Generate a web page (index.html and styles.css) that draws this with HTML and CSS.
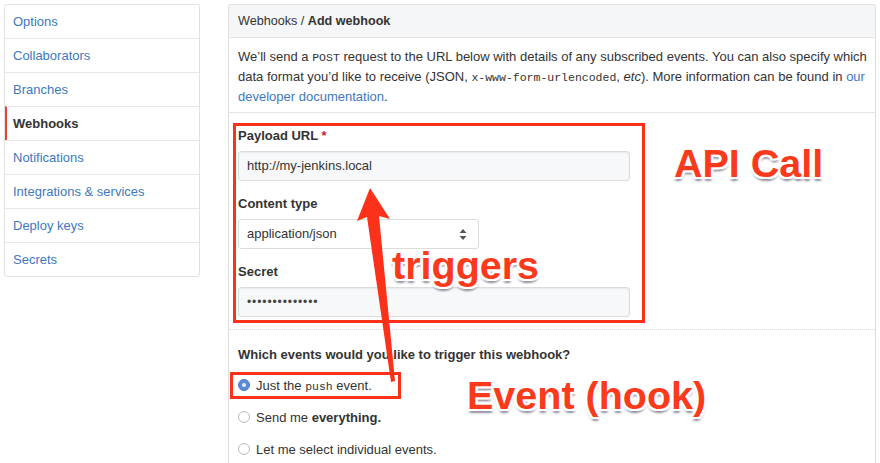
FILE: index.html
```html
<!DOCTYPE html>
<html lang="en">
<head>
<meta charset="utf-8">
<title>Add webhook</title>
<link rel="stylesheet" href="styles.css">
</head>
<body>
<div class="page">
  <nav class="menu">
    <a class="menu-item">Options</a>
    <a class="menu-item">Collaborators</a>
    <a class="menu-item">Branches</a>
    <a class="menu-item selected">Webhooks</a>
    <a class="menu-item">Notifications</a>
    <a class="menu-item">Integrations &amp; services</a>
    <a class="menu-item">Deploy keys</a>
    <a class="menu-item">Secrets</a>
  </nav>
  <main class="panel">
    <div class="panel-head">Webhooks / <strong>Add webhook</strong></div>
    <div class="panel-desc">
      <p>We’ll send a <code>POST</code> request to the URL below with details of any subscribed events. You can also specify which data format you’d like to receive (JSON, <code>x-www-form-urlencoded</code>, <em>etc</em>). More information can be found in <a class="link">our developer documentation</a>.</p>
    </div>
    <div class="panel-form">
      <div class="field">
        <div class="label">Payload URL <span class="req">*</span></div>
        <div class="input wide">http://my-jenkins.local</div>
      </div>
      <div class="field">
        <div class="label">Content type</div>
        <div class="input select"><span>application/json</span>
          <svg class="updown" width="8" height="11" viewBox="0 0 8 11"><path d="M4 0 L7.5 4 L0.5 4 Z M4 11 L7.5 7 L0.5 7 Z" fill="#555"/></svg>
        </div>
      </div>
      <div class="field">
        <div class="label">Secret</div>
        <div class="input wide secret">••••••••••••••</div>
      </div>
    </div>
    <div class="panel-events">
      <div class="question">Which events would you like to trigger this webhook?</div>
      <div class="radio"><span class="dot checked"></span><span>Just the <code class="push">push</code> event.</span></div>
      <div class="radio"><span class="dot"></span><span>Send me <strong>everything.</strong></span></div>
      <div class="radio"><span class="dot"></span><span>Let me select individual events.</span></div>
    </div>
  </main>
</div>

<div class="annotations">
  <div class="mark box-form"></div>
  <div class="mark box-push"></div>
  <svg class="arrow" width="880" height="463" viewBox="0 0 880 463">
    <polygon points="370,188 390,219 379,216 395,381 391,382 367,217 357,221" fill="#fb3219"/>
  </svg>
  <div class="note note-api">API Call</div>
  <div class="note note-triggers">triggers</div>
  <div class="note note-event">Event (hook)</div>
</div>
</body>
</html>
```

FILE: styles.css
```css
html, body {
  margin: 0;
  height: 100%;
  overflow: hidden;
  background: #fff;
}
body {
  font-family: "Liberation Sans", Arial, Helvetica, sans-serif;
  font-size: 13px;
  color: #333;
  position: relative;
}
.page {
  display: flex;
  align-items: flex-start;
  gap: 28px;
  padding: 4px 4px 0;
  height: 100%;
  box-sizing: border-box;
}
.menu {
  width: 196px;
  box-sizing: border-box;
  border: 1px solid #e1e1e1;
  border-radius: 3px;
  display: flex;
  flex-direction: column;
}
.menu-item {
  display: block;
  height: 33px;
  line-height: 33px;
  padding-left: 8px;
  color: #4078c0;
  border-top: 1px solid #e8e8e8;
}
.menu-item:first-child { border-top: 0; }
.menu-item.selected {
  color: #333;
  font-weight: bold;
  border-left: 2px solid #e4472f;
  padding-left: 6px;
}
.panel {
  flex: 1;
  align-self: stretch;
  border: 1px solid #dedede;
  border-bottom: 0;
  border-radius: 3px 3px 0 0;
  overflow: hidden;
}
.panel-head {
  background: #f5f6f8;
  border-bottom: 1px solid #e5e5e5;
  padding: 6px 9px;
  line-height: 20px;
  color: #333;
  font-size: 12.6px;
}
.panel-desc {
  padding: 9px 3px 6px 9px;
  border-bottom: 1px solid #e5e5e5;
}
.panel-desc p {
  margin: 0;
  line-height: 19px;
}
code {
  font-family: "Liberation Mono", "DejaVu Sans Mono", monospace;
  font-size: 11.5px;
}
.link { color: #4078c0; }
.panel-form {
  padding: 13px 9px 12px;
  display: flex;
  flex-direction: column;
  gap: 13px;
  border-bottom: 1px dotted #dcdcdc;
}
.label {
  font-weight: bold;
  line-height: 20px;
  margin-bottom: 5px;
}
.req { color: #cb2431; }
.input {
  box-sizing: border-box;
  height: 30px;
  line-height: 28px;
  padding: 0 8px;
  border: 1px solid #dcdcdc;
  border-radius: 3px;
  background: #f7f8fa;
  box-shadow: inset 0 1px 2px rgba(0,0,0,0.06);
  color: #333;
}
.input.wide { width: 392px; }
.input.select {
  width: 241px;
  background: #fff;
  display: flex;
  justify-content: space-between;
  align-items: center;
  box-shadow: none;
}
.updown { margin-right: 3px; }
.secret {
  letter-spacing: 0.9px;
  font-size: 12px;
  color: #444;
}
.panel-events {
  padding: 15px 9px 0;
}
.question {
  font-weight: bold;
  line-height: 20px;
  margin-bottom: 4px;
}
.radio {
  height: 32px;
  display: flex;
  align-items: center;
  gap: 6px;
}
.push {
  font-family: "Liberation Mono", "DejaVu Sans Mono", monospace;
  font-size: 11.5px;
}
.dot {
  width: 12px;
  height: 12px;
  border-radius: 50%;
  border: 1px solid #b9b9b9;
  background: #fff;
  box-sizing: border-box;
  position: relative;
  flex: none;
}
.dot.checked {
  background: #5b8ad6;
  border-color: #4f7dc8;
}
.dot.checked::after {
  content: "";
  position: absolute;
  left: 3px;
  top: 3px;
  width: 4px;
  height: 4px;
  border-radius: 50%;
  background: #e9eefa;
}

/* annotation overlay */
.annotations {
  position: absolute;
  inset: 0;
  pointer-events: none;
}
.mark {
  position: absolute;
  border: 3px solid #fb3219;
  box-sizing: border-box;
}
.box-form { left: 233px; top: 123px; width: 412px; height: 200px; }
.box-push { left: 230px; top: 372px; width: 171px; height: 27px; }
.arrow { position: absolute; left: 0; top: 0; }
.note {
  position: absolute;
  font-family: "Liberation Sans", Arial, sans-serif;
  font-weight: bold;
  font-size: 39.5px;
  line-height: 1;
  color: #fb3a1c;
  white-space: nowrap;
  text-shadow:
    2px 0 #fff, -2px 0 #fff, 0 2px #fff, 0 -2px #fff,
    2px 2px #fff, -2px 2px #fff, 2px -2px #fff, -2px -2px #fff,
    1px 4px 2px rgba(90,90,110,0.45), -1px 4px 2px rgba(90,90,110,0.35);
}
.note-api { left: 674px; top: 144px; }
.note-triggers { left: 392px; top: 246px; }
.note-event { left: 467px; top: 376px; }
```
